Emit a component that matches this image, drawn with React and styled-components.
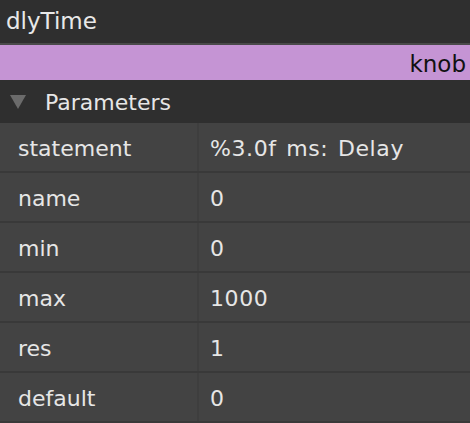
import React from 'react'
import styled, { createGlobalStyle } from 'styled-components'

const Global = createGlobalStyle`
  html, body { margin: 0; padding: 0; background: #2f2f2f; }
  body { font-family: "DejaVu Sans", Verdana, sans-serif; }
`

const Panel = styled.div`
  width: 470px;
  height: 423px;
  overflow: hidden;
  background: #2f2f2f;
  display: flex;
  flex-direction: column;
`

const Title = styled.div`
  height: 46px;
  box-sizing: border-box;
  padding: 0 0 2px 6px;
  display: flex;
  align-items: center;
  color: #e8e8e8;
  font-size: 23px;
  border-bottom: 2px solid #4a4a4a;
`

const TypeBar = styled.div`
  height: 35px;
  background: #c594d4;
  color: #111;
  font-size: 23px;
  display: flex;
  align-items: center;
  justify-content: flex-end;
  padding-right: 4px;
  padding-top: 2px;
  box-sizing: border-box;
`

const SectionHeader = styled.div`
  height: 44px;
  box-sizing: border-box;
  display: flex;
  align-items: center;
  gap: 19px;
  padding: 2px 0 0 10px;
  color: #e6e6e6;
  font-size: 22px;
`

const Triangle = styled.span`
  width: 0;
  height: 0;
  border-left: 8px solid transparent;
  border-right: 8px solid transparent;
  border-top: 14px solid #6b6b6b;
`

const Table = styled.div`
  display: flex;
  flex-direction: column;
`

const Row = styled.div`
  display: grid;
  grid-template-columns: 199px 1fr;
  height: 50px;
  box-sizing: border-box;
  background: #434343;
  border-bottom: 2px solid #393939;
  color: #e6e6e6;
  font-size: 22px;
`

const Key = styled.div`
  display: flex;
  align-items: center;
  padding: 3px 0 0 18px;
  border-right: 2px solid #3e3e3e;
`

const Value = styled.div`
  display: flex;
  align-items: center;
  padding: 3px 0 0 11px;
  letter-spacing: 0.6px;
  word-spacing: 2px;
`

const params = [
  ['statement', '%3.0f ms: Delay'],
  ['name', '0'],
  ['min', '0'],
  ['max', '1000'],
  ['res', '1'],
  ['default', '0'],
]

export default function App() {
  return (
    <Panel>
      <Global />
      <Title>dlyTime</Title>
      <TypeBar>knob</TypeBar>
      <SectionHeader>
        <Triangle />
        Parameters
      </SectionHeader>
      <Table>
        {params.map(([k, v]) => (
          <Row key={k}>
            <Key>{k}</Key>
            <Value>{v}</Value>
          </Row>
        ))}
      </Table>
    </Panel>
  )
}
